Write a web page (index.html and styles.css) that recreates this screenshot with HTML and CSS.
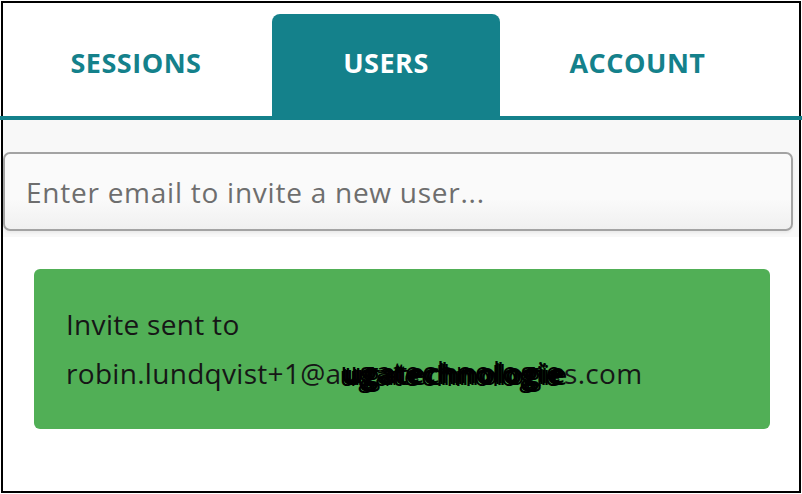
FILE: index.html
```html
<!DOCTYPE html>
<html lang="en">
<head>
    <meta charset="UTF-8">
    <title>Users</title>
    <link rel="stylesheet" href="styles.css">
</head>
<body>

    <div class="frame">
        <!-- Tabs -->
        <div class="tabs">
            <div class="tab tab-sessions">SESSIONS</div>
            <div class="tab tab-users active">USERS</div>
            <div class="tab tab-account">ACCOUNT</div>
        </div>

        <div class="invite-bar">
            <input class="invite-input" type="text" placeholder="Enter email to invite a new user...">
        </div>

        <div class="alert-success">
            Invite sent to<br>
            robin.lundqvist+1@a<span class="redacted">ugatechnologie</span>s.com
        </div>
    </div>

</body>
</html>
```

FILE: styles.css
```css
body {
    margin: 0;
    background: #ffffff;
    font-family: 'Open Sans', Lato, sans-serif;
    overflow: hidden;
}

.frame {
    width: 800px;
    height: 492px;
    margin: 1px;
    border: 2px solid #000;
    box-sizing: border-box;
    background: #fff;
}

.tabs {
    display: flex;
    align-items: flex-end;
    height: 113px;
    margin: 0 -3px;
    border-bottom: 4px solid #14818b;
}

.tab {
    height: 102px;
    display: flex;
    align-items: center;
    justify-content: center;
    font-weight: bold;
    font-size: 27px;
    letter-spacing: 0.5px;
    color: #14818b;
    padding-bottom: 5px;
    box-sizing: border-box;
}

.tab-sessions { width: 272px; }
.tab-users { width: 228px; }
.tab-account { width: 275px; }

.tab.active {
    background: #14818b;
    color: #fff;
    border-radius: 8px 8px 0 0;
}

.invite-bar {
    background: #f8f8f8;
    padding: 32px 6px 6px 0;
}

.invite-input {
    display: block;
    width: 100%;
    height: 79px;
    box-sizing: border-box;
    border: 2px solid #a3a3a3;
    border-radius: 7px;
    background: linear-gradient(#fafafa 60%, #f0f0f0);
    box-shadow: 0 2px 3px rgba(0, 0, 0, 0.06);
    padding: 0 21px;
    font-family: inherit;
    font-size: 28px;
    letter-spacing: 0.75px;
    color: #333;
    outline: none;
}

.invite-input::placeholder {
    color: #6e6e6e;
}

.alert-success {
    margin: 32px 29px 0 31px;
    background: #51af56;
    border-radius: 6px;
    padding: 31px 32px;
    font-size: 28px;
    letter-spacing: 0.3px;
    line-height: 49px;
    color: #161616;
}

/* scribbled-out part of the address */
.redacted {
    color: #000;
    letter-spacing: 1.6px;
    text-shadow: 2px 1px 0 #000, -2px 2px 0 #000, 3px -1px 0 #000, 5px 1px 0 #000, -1px -2px 0 #000;
}
```
